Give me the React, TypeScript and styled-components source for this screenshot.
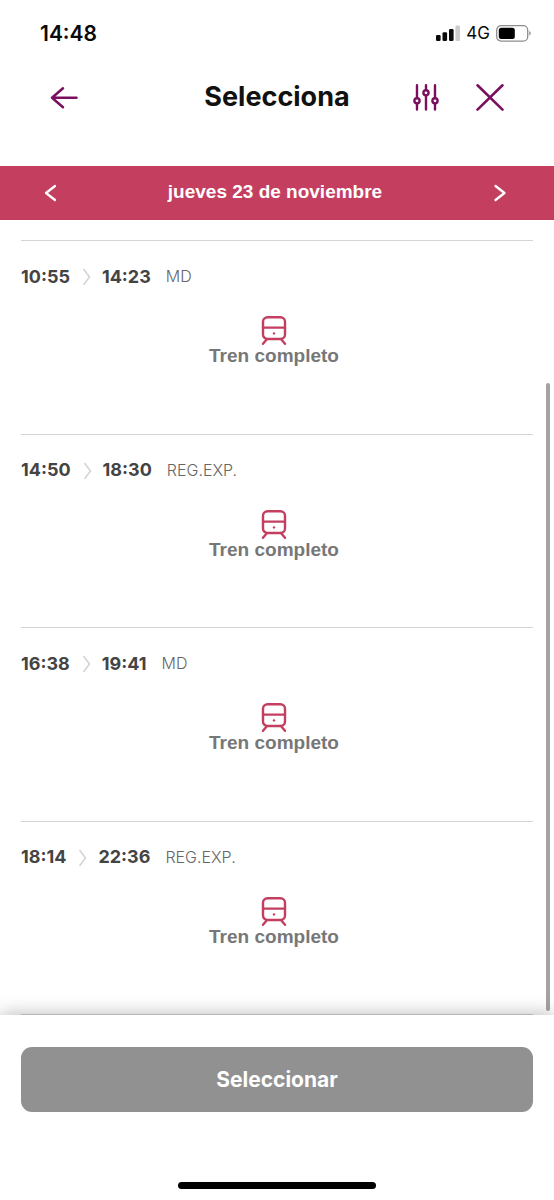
import React from "react";
import styled, { createGlobalStyle } from "styled-components";

const GlobalStyle = createGlobalStyle`
  * { box-sizing: border-box; }
  body {
    margin: 0;
    background: #fff;
    font-family: Inter, sans-serif;
  }
  svg { display: block; flex: none; }
`;

const Screen = styled.div`
  display: flex;
  flex-direction: column;
  min-height: 100vh;
`;

const StatusBar = styled.div`
  display: flex;
  align-items: center;
  justify-content: space-between;
  height: 66px;
  padding: 0 23px 0 40px;
  color: #0a0a0a;
`;

const Clock = styled.time`
  font-size: 21px;
  font-weight: 600;
`;

const StatusIcons = styled.div`
  display: flex;
  align-items: center;
  gap: 6px;
  font-size: 17px;
  font-weight: 400;
`;

const Header = styled.header`
  display: grid;
  grid-template-columns: 1fr auto 1fr;
  align-items: center;
  height: 100px;
  padding: 0 48px 38px;
`;

const Title = styled.h1`
  margin: 0;
  font-size: 27px;
  font-weight: 700;
  line-height: 32px;
  color: #111;
`;

const HeaderActions = styled.div`
  display: flex;
  justify-content: flex-end;
  gap: 35px;
`;

const IconButton = styled.button`
  display: flex;
  justify-self: start;
  padding: 0;
  border: 0;
  background: none;
  color: #7a0f5e;
  cursor: pointer;
`;

const DateBar = styled.nav`
  display: flex;
  align-items: center;
  justify-content: space-between;
  height: 54px;
  padding: 0 44px 2px 40px;
  background: #c43e60;
`;

const DateButton = styled(IconButton)`
  color: #fff;
`;

const DateLabel = styled.h2`
  margin: 0;
  font-family: "Liberation Sans", Arial, sans-serif;
  font-size: 19px;
  font-weight: 700;
  color: #fff;
`;

const ListArea = styled.main`
  position: relative;
  display: flex;
  flex: 1;
  padding: 20px 21px 0;
`;

const TrainList = styled.ul`
  display: flex;
  flex: 1;
  flex-direction: column;
  margin: 0;
  padding: 0;
  list-style: none;
  border-bottom: 1px solid #d3d5d4;
`;

const TrainRow = styled.li`
  flex: 1;
  min-height: 150px;
  padding-top: 23px;
  border-top: 1px solid #d3d5d4;
`;

const Times = styled.div`
  display: flex;
  align-items: center;
  height: 24px;
  font-size: 18px;
  font-weight: 700;
  color: #444;
`;

const TimesArrow = styled.svg`
  margin: 0 11px 0 12px;
`;

const Service = styled.span`
  margin-left: 15px;
  font-size: 16px;
  font-weight: 300;
  color: #666;
`;

const Availability = styled.p`
  display: flex;
  flex-direction: column;
  align-items: center;
  margin: 27px 6px 0 0;
  font-family: "Liberation Sans", Arial, sans-serif;
  font-size: 19px;
  font-weight: 700;
  line-height: 22px;
  color: #777;
`;

const ScrollThumb = styled.div`
  position: absolute;
  top: 20.5%;
  right: 4px;
  bottom: 4px;
  width: 4px;
  border-radius: 2px;
  background: #a3a3a3;
`;

const Footer = styled.footer`
  position: relative;
  display: flex;
  flex-direction: column;
  align-items: center;
  height: 185px;
  padding: 32px 21px 11px;
  background: #fff;
  box-shadow: 0 0 18px rgba(0, 0, 0, 0.3);
`;

const SelectButton = styled.button`
  width: 100%;
  height: 65px;
  padding-bottom: 2px;
  border: 0;
  border-radius: 11px;
  background: #919191;
  color: #fff;
  font-family: inherit;
  font-size: 21px;
  font-weight: 700;
`;

const HomeIndicator = styled.div`
  width: 198px;
  height: 7px;
  margin-top: auto;
  border-radius: 4px;
  background: #000;
`;

const trains = [
  { departure: "10:55", arrival: "14:23", service: "MD" },
  { departure: "14:50", arrival: "18:30", service: "REG.EXP." },
  { departure: "16:38", arrival: "19:41", service: "MD" },
  { departure: "18:14", arrival: "22:36", service: "REG.EXP." },
];

const SignalIcon = () => (
  <svg width="24" height="16" viewBox="0 0 24 16" fill="currentColor" aria-hidden="true">
    <rect x="0" y="10" width="4.6" height="6" rx="1.3" />
    <rect x="6.5" y="7.2" width="4.6" height="8.8" rx="1.3" />
    <rect x="13" y="4" width="4.6" height="12" rx="1.3" />
    <rect x="19.4" y="0.5" width="4.6" height="15.5" rx="1.3" fill="#ccc" />
  </svg>
);

const BatteryIcon = () => (
  <svg width="35" height="17" viewBox="0 0 35 17" fill="none" aria-hidden="true">
    <rect x="0.7" y="0.7" width="31" height="15.4" rx="4.4" stroke="#8e8e8e" strokeWidth="1.3" />
    <rect x="2.8" y="2.7" width="16" height="11.4" rx="2.5" fill="#000" />
    <path d="M33.2 6v4.6c2-.8 2-3.8 0-4.6z" fill="#8e8e8e" />
  </svg>
);

const BackIcon = () => (
  <svg width="32" height="28" viewBox="0 0 32 28" fill="none" stroke="currentColor" strokeWidth="2.5" strokeLinecap="round" strokeLinejoin="round" aria-hidden="true">
    <path d="M28.5 14.7H4M15 5.2L4 14.7l11 9.5" />
  </svg>
);

const FilterIcon = () => (
  <svg width="26" height="28" viewBox="0 0 26 28" fill="none" stroke="currentColor" strokeWidth="2.4" strokeLinecap="round" aria-hidden="true">
    <path d="M4 2.3v12.6M4 20.6v6M13 2.3V7M13 12.4v14.2M22 2.3v12.6M22 20.6v6" />
    <circle cx="4" cy="17.8" r="2.6" />
    <circle cx="13" cy="9.8" r="2.6" />
    <circle cx="22" cy="17.8" r="2.6" />
  </svg>
);

const CloseIcon = () => (
  <svg width="32" height="28" viewBox="0 0 32 28" fill="none" stroke="currentColor" strokeWidth="2.6" strokeLinecap="round" aria-hidden="true">
    <path d="M3.5 2.3l25 24.3M28.5 2.3l-25 24.3" />
  </svg>
);

const ChevronIcon = ({ direction }: { direction: "left" | "right" }) => (
  <svg width="20" height="20" viewBox="0 0 20 20" fill="none" stroke="currentColor" strokeWidth="2.3" strokeLinecap="round" strokeLinejoin="round" aria-hidden="true">
    <path d={direction === "left" ? "M15 4L6 11l9 7" : "M5.5 4l9 7-9 7"} />
  </svg>
);

const TrainIcon = () => (
  <svg width="26" height="30" viewBox="0 0 26 30" fill="none" stroke="#c43e60" strokeWidth="2.4" strokeLinecap="round" aria-hidden="true">
    <rect x="2" y="2.2" width="22" height="21.8" rx="4.5" />
    <path d="M2 12.6h22M5.2 25L2 28.8M20.8 25l3.2 3.8" />
    <circle cx="13" cy="18.4" r="1.2" fill="#c43e60" stroke="none" />
  </svg>
);

export default function App() {
  return (
    <Screen>
      <GlobalStyle />
      <StatusBar>
        <Clock>14:48</Clock>
        <StatusIcons>
          <SignalIcon />
          4G
          <BatteryIcon />
        </StatusIcons>
      </StatusBar>
      <Header>
        <IconButton type="button" aria-label="Volver">
          <BackIcon />
        </IconButton>
        <Title>Selecciona</Title>
        <HeaderActions>
          <IconButton type="button" aria-label="Filtros">
            <FilterIcon />
          </IconButton>
          <IconButton type="button" aria-label="Cerrar">
            <CloseIcon />
          </IconButton>
        </HeaderActions>
      </Header>
      <DateBar>
        <DateButton type="button" aria-label="Día anterior">
          <ChevronIcon direction="left" />
        </DateButton>
        <DateLabel>jueves 23 de noviembre</DateLabel>
        <DateButton type="button" aria-label="Día siguiente">
          <ChevronIcon direction="right" />
        </DateButton>
      </DateBar>
      <ListArea>
        <TrainList>
          {trains.map((train) => (
            <TrainRow key={train.departure}>
              <Times>
                <time>{train.departure}</time>
                <TimesArrow width="9" height="18" viewBox="0 0 9 18" fill="none" stroke="#d2d2d2" strokeWidth="1.5" aria-hidden="true">
                  <path d="M1.5 2L7.5 10l-6 8" />
                </TimesArrow>
                <time>{train.arrival}</time>
                <Service>{train.service}</Service>
              </Times>
              <Availability>
                <TrainIcon />
                Tren completo
              </Availability>
            </TrainRow>
          ))}
        </TrainList>
        <ScrollThumb />
      </ListArea>
      <Footer>
        <SelectButton type="button">Seleccionar</SelectButton>
        <HomeIndicator />
      </Footer>
    </Screen>
  );
}
